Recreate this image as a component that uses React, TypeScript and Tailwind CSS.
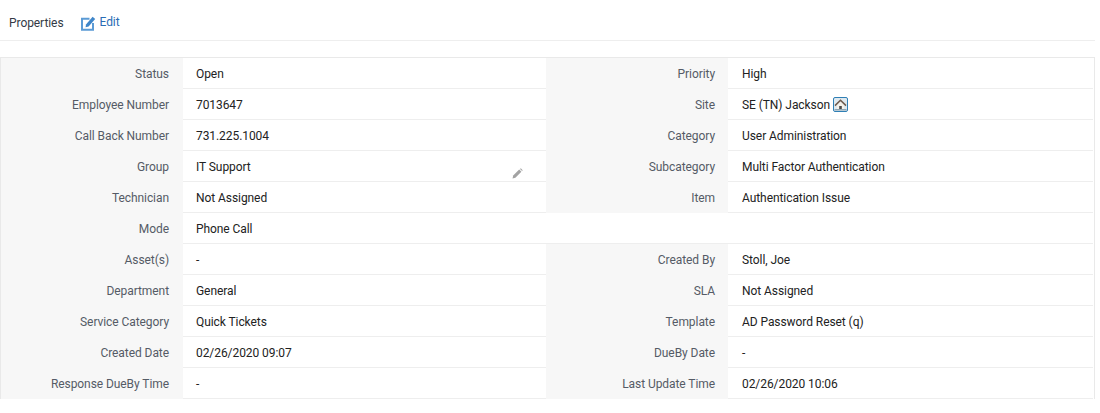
const rows: [string, string, string, string][] = [
  ["Status", "Open", "Priority", "High"],
  ["Employee Number", "7013647", "Site", "SE (TN) Jackson"],
  ["Call Back Number", "731.225.1004", "Category", "User Administration"],
  ["Group", "IT Support", "Subcategory", "Multi Factor Authentication"],
  ["Technician", "Not Assigned", "Item", "Authentication Issue"],
  ["Mode", "Phone Call", "", ""],
  ["Asset(s)", "-", "Created By", "Stoll, Joe"],
  ["Department", "General", "SLA", "Not Assigned"],
  ["Service Category", "Quick Tickets", "Template", "AD Password Reset (q)"],
  ["Created Date", "02/26/2020 09:07", "DueBy Date", "-"],
  ["Response DueBy Time", "-", "Last Update Time", "02/26/2020 10:06"],
]

function EditIcon() {
  return (
    <svg width="15" height="15" viewBox="0 0 15 15" fill="none">
      <path d="M8.5 2.8H1v11h11V7" stroke="#5b9bd5" strokeWidth="2" />
      <path d="M5 8.4 11.6.8l2.6 2.2-6.6 7.6-3 .6z" fill="#3f86c9" />
    </svg>
  )
}

function SiteIcon() {
  return (
    <span className="ml-[3px] flex h-[15px] w-[15px] items-center justify-center rounded-[2px] border border-[#2f7fb5] bg-[#dfe9ef]">
      <svg width="13" height="13" viewBox="0 0 13 13">
        <path d="M3 7 6.5 3.8 10 7v4H3z" fill="#f4f1ea" />
        <path d="M1 7.6 6.5 2.2 12 7.6" fill="none" stroke="#6e5a4c" strokeWidth="1.5" />
        <path d="M5.2 8h2.6v3H5.2z" fill="#4a4a4a" />
        <path d="M0.5 11h12v1.5H.5z" fill="#8fa6b4" />
      </svg>
    </span>
  )
}

function PencilIcon() {
  return (
    <svg width="11" height="11" viewBox="0 0 11 11" className="absolute left-[329px] top-[17px]">
      <path d="M0.5 10.5 1.2 7.6 7.2 1.6 9.4 3.8 3.4 9.8z" fill="#a3a3a3" />
      <path d="M8 0.9 8.8 0.3 10.7 2.2 10.1 3.1z" fill="#a3a3a3" />
    </svg>
  )
}

export default function App() {
  return (
    <div className="h-[413px] w-[1100px] bg-white font-['Roboto',sans-serif] text-[12px] tracking-[-0.07px]">
      <div className="flex h-[41px] w-[1095px] items-center border-b border-[#eeeeee] pt-[6px] pl-[9px]">
        <span className="text-[#333a45]">Properties</span>
        <span className="ml-[17px] flex items-center gap-[4px] text-[#2a6db5]">
          <EditIcon />
          <span className="-mt-[3px]">Edit</span>
        </span>
      </div>
      <div className="mt-[16px] w-[1095px] border border-b-0 border-[#e9e9e9]">
        {rows.map((r) => {
          const blank = r[2] === ""
          return (
            <div key={r[0]} className="grid h-[31px] grid-cols-[182px_363px_182px_1fr]">
              <div className="flex items-center justify-end bg-[#f7f7f7] pr-[14px] text-[#555b66]">{r[0]}</div>
              <div className="relative flex items-center border-b border-[#eeeeee] pt-[1px] pl-[13px] text-[#222222]">
                {r[1]}
                {r[0] === "Group" && <PencilIcon />}
              </div>
              <div
                className={
                  blank
                    ? "flex items-center justify-end border-b border-[#eeeeee] pr-[13px] text-[#555b66]"
                    : "flex items-center justify-end bg-[#f7f7f7] pr-[13px] text-[#555b66]"
                }
              >
                {r[2]}
              </div>
              <div className="mr-[1px] flex items-center border-b border-[#eeeeee] pt-[1px] pl-[14px] text-[#222222]">
                {r[3]}
                {r[2] === "Site" && <SiteIcon />}
              </div>
            </div>
          )
        })}
      </div>
    </div>
  )
}
